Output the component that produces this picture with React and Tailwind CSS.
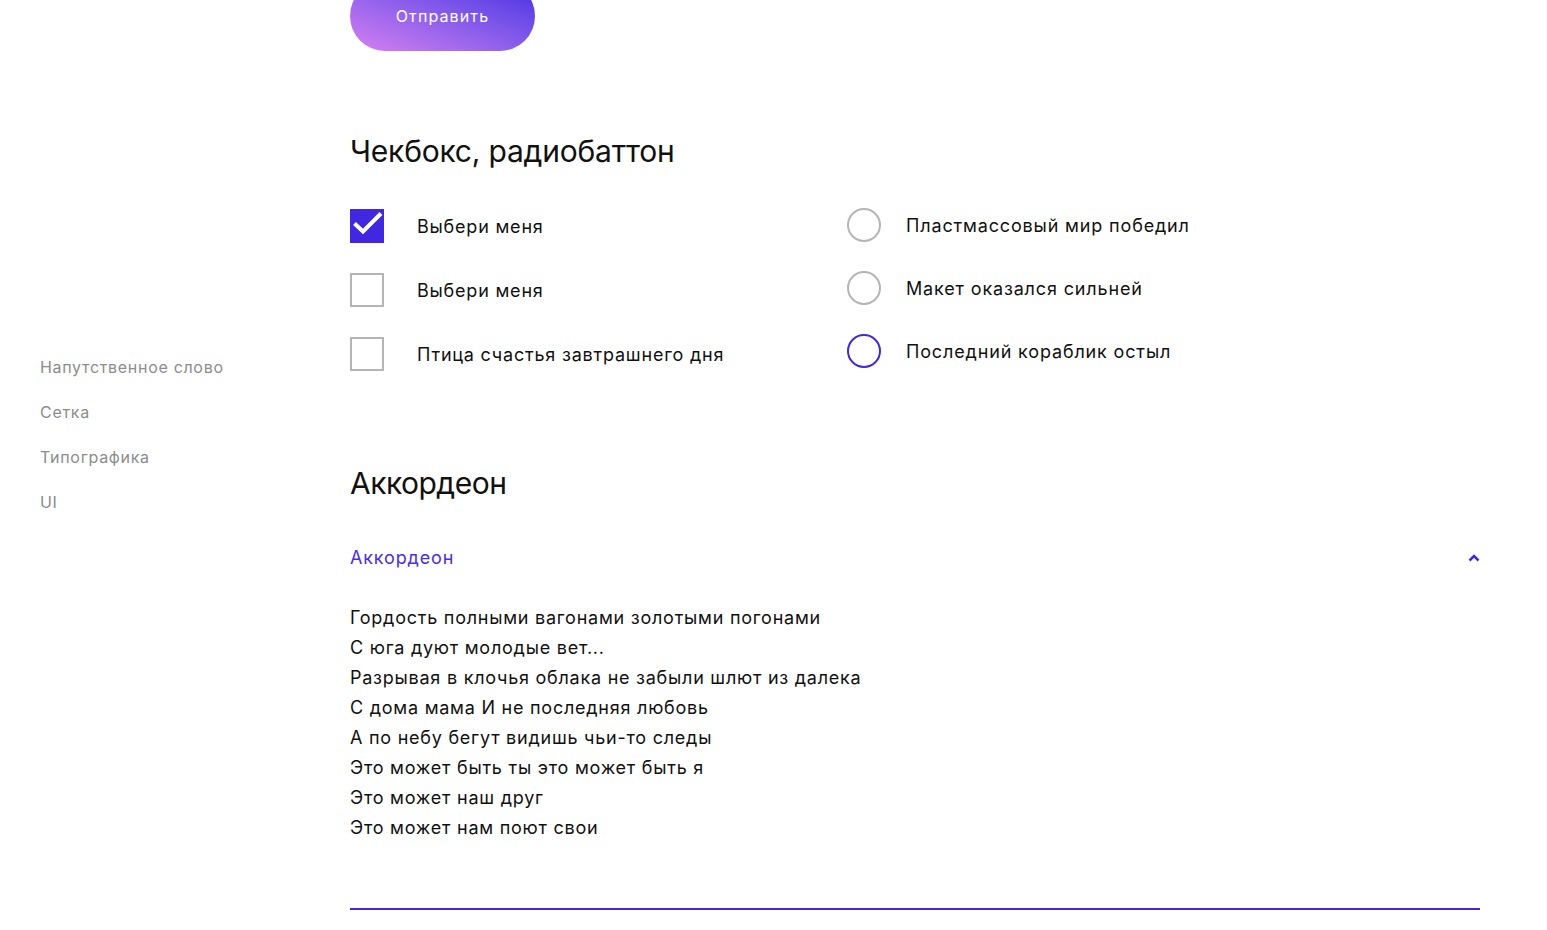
import React, { useState } from 'react';

const navItems = ['Напутственное слово', 'Сетка', 'Типографика', 'UI'];

const checkboxes = [
    { label: 'Выбери меня', checked: true },
    { label: 'Выбери меня', checked: false },
    { label: 'Птица счастья завтрашнего дня', checked: false },
];

const radios = [
    { label: 'Пластмассовый мир победил' },
    { label: 'Макет оказался сильней' },
    { label: 'Последний кораблик остыл', focus: true },
];

const lines = [
    'Гордость полными вагонами золотыми погонами',
    'С юга дуют молодые вет...',
    'Разрывая в клочья облака не забыли шлют из далека',
    'С дома мама И не последняя любовь',
    'А по небу бегут видишь чьи-то следы',
    'Это может быть ты это может быть я',
    'Это может наш друг',
    'Это может нам поют свои',
];

export default function App() {
    const [checks, setChecks] = useState(checkboxes.map(c => c.checked));
    const [open, setOpen] = useState(true);

    return (
        <div className="flex min-h-screen bg-white text-[#111] overflow-hidden" style={{ fontFamily: 'Inter, "Liberation Sans", sans-serif' }}>
            <aside className="w-[350px] shrink-0 pl-10 pt-[356px]">
                <nav className="flex flex-col gap-[23px]">
                    {navItems.map(n => (
                        <a key={n} className="text-[16px] leading-[22px] text-[#8c8c8c] tracking-[0.043em]">{n}</a>
                    ))}
                </nav>
            </aside>

            <main className="w-[1130px] shrink-0">
                <button className="-mt-[19px] h-[70px] w-[185px] rounded-full bg-gradient-to-tr from-[#d67ff0] to-[#4526e2] text-white text-[16px] tracking-[0.07em] flex items-center justify-center">
                    Отправить
                </button>

                <h2 className="mt-[82px] text-[30px] leading-[36px] tracking-[-0.007em]">Чекбокс, радиобаттон</h2>

                <div className="mt-[40px] flex">
                    <div className="w-[497px] flex flex-col gap-[30px]">
                        {checkboxes.map((c, i) => (
                            <label key={i} className="flex items-center h-[34px] cursor-pointer" onClick={() => setChecks(p => p.map((v, j) => j === i ? !v : v))}>
                                {checks[i] ? (
                                    <span className="w-[34px] h-[34px] bg-[#4127e0]">
                                        <svg width="34" height="34" viewBox="0 0 34 34" fill="none">
                                            <path d="M4.5 14.5l8.5 8L31 4.5" stroke="white" strokeWidth="4" />
                                        </svg>
                                    </span>
                                ) : (
                                    <span className="w-[34px] h-[34px] border-2 border-[#b5b5b5]" />
                                )}
                                <span className="ml-[33px] text-[18px] tracking-[0.044em]">{c.label}</span>
                            </label>
                        ))}
                    </div>
                    <div className="flex flex-col gap-[29px] -mt-px">
                        {radios.map((r, i) => (
                            <label key={i} className="flex items-center h-[34px] cursor-pointer">
                                <span className={`w-[34px] h-[34px] rounded-full border-2 ${r.focus ? 'border-[#4127e0]' : 'border-[#b5b5b5]'}`} />
                                <span className="ml-[25px] text-[18px] tracking-[0.047em]">{r.label}</span>
                            </label>
                        ))}
                    </div>
                </div>

                <h2 className="mt-[94px] text-[30px] leading-[36px] tracking-[-0.017em]">Аккордеон</h2>

                <div className="mt-[43px] border-b-2 border-[#4127e0] pb-[65px]">
                    <button onClick={() => setOpen(!open)} className="w-full flex items-center justify-between h-[27px] text-[18px] text-[#4a2ee6] tracking-[0.047em]">
                        <span>Аккордеон</span>
                        <svg width="12" height="8" viewBox="0 0 12 8" fill="none" className={open ? '' : 'rotate-180'}>
                            <path d="M1.5 6.5L6 2l4.5 4.5" stroke="#4127e0" strokeWidth="2.5" />
                        </svg>
                    </button>
                    {open && (
                        <div className="mt-[32px] flex flex-col">
                            {lines.map((l, i) => (
                                <p key={i} className="text-[18px] leading-[30px] tracking-[0.042em]">{l}</p>
                            ))}
                        </div>
                    )}
                </div>
            </main>
        </div>
    );
}
